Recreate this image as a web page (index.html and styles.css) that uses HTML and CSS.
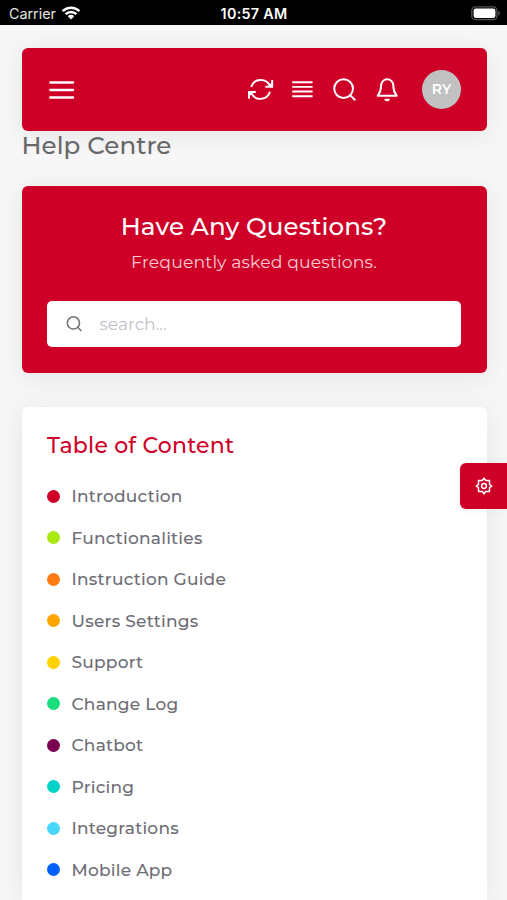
FILE: index.html
```html
<!DOCTYPE html>
<html lang="en">
<head>
<meta charset="utf-8">
<title>Help Centre</title>
<link rel="stylesheet" href="styles.css">
</head>
<body>
<div class="status">
  <div class="carrier"><span>Carrier</span>
    <svg width="20" height="14" viewBox="0 0 20 14"><path d="M1.6 5.2a12 12 0 0 1 16.8 0M4.6 8.2a7.7 7.7 0 0 1 10.8 0" fill="none" stroke="#fff" stroke-width="2.5"/><path d="M10 13.4 6.8 10.2a4.5 4.5 0 0 1 6.4 0z" fill="#fff"/></svg>
  </div>
  <div class="time">10:57 AM</div>
  <div class="battery">
    <svg width="30" height="15" viewBox="0 0 30 15"><rect x=".8" y=".8" width="25.2" height="12.9" rx="3.8" fill="none" stroke="#555" stroke-width="1.3"/><rect x="2.6" y="2.6" width="21.8" height="9.3" rx="2.2" fill="#fff"/><path d="M27.4 5v4.6c2-.7 2-3.9 0-4.6z" fill="#555"/></svg>
  </div>
</div>
<main>
  <nav class="navbar">
    <svg class="menu" width="26" height="20" viewBox="0 0 26 20"><path d="M1.3 2.5h22.8M1.3 10h22.8M1.3 17.5h22.8" stroke="#fff" stroke-width="2.3" stroke-linecap="round"/></svg>
    <div class="actions">
      <svg width="26" height="24" viewBox="0 0 26 24" fill="none" stroke="#fff" stroke-width="1.9"><path d="M3.2 9A10 10 0 0 1 21.9 7.9M22 13.8A10 10 0 0 1 3.3 14.9"/><path d="M24.2 2.1v6.7h-6.8M1 20.7V14h6.8"/><path d="M24.2 4v4.8h-4.8zM1 18.8V14h4.8z" fill="#fff" stroke="none"/></svg>
      <svg width="22" height="18" viewBox="0 0 22 18" stroke="#fff" stroke-width="1.9"><path d="M.2 1.2h20.4M.2 5.9h20.4M.2 10.5h20.4M.2 15.2h20.4"/></svg>
      <svg width="24" height="24" viewBox="0 0 24 24" fill="none" stroke="#fff" stroke-width="2" stroke-linecap="round"><circle cx="10.6" cy="10.6" r="9.4"/><path d="m17.3 17.4 4.4 4.3"/></svg>
      <svg width="24" height="26" viewBox="0 0 24 26" fill="none" stroke="#fff" stroke-width="2" stroke-linecap="round" stroke-linejoin="round"><path d="M18.3 8.4a6.1 6.1 0 0 0-12.2 0c0 7.4-3.4 9.6-3.4 10.4h19c0-.8-3.4-3-3.4-10.4"/><path d="M10.1 22.5a2.4 2.4 0 0 0 4 0z" fill="#fff" stroke-width="1.4"/></svg>
      <div class="avatar">RY</div>
    </div>
  </nav>
  <h1>Help Centre</h1>
  <section class="faq">
    <h2>Have Any Questions?</h2>
    <p>Frequently asked questions.</p>
    <label class="search">
      <svg width="17" height="17" viewBox="0 0 17 17" fill="none" stroke="#75757d" stroke-width="1.6" stroke-linecap="round"><circle cx="7.4" cy="6.9" r="6.1"/><path d="m11.8 11.3 3.2 3.2"/></svg>
      <span>search...</span>
    </label>
  </section>
  <section class="toc">
    <h3>Table of Content</h3>
    <ul>
      <li>Introduction</li>
      <li>Functionalities</li>
      <li>Instruction Guide</li>
      <li>Users Settings</li>
      <li>Support</li>
      <li>Change Log</li>
      <li>Chatbot</li>
      <li>Pricing</li>
      <li>Integrations</li>
      <li>Mobile App</li>
    </ul>
  </section>
</main>
<div class="customizer">
  <svg width="18" height="18" viewBox="0 0 18 18" fill="none" stroke="#fff" stroke-width="1.5" stroke-linejoin="round"><circle cx="9" cy="9" r="2.4"/><path d="M9 1.2 10.7 3.5 14.5 3.5 14.5 7.3 16.8 9 14.5 10.7 14.5 14.5 10.7 14.5 9 16.8 7.3 14.5 3.5 14.5 3.5 10.7 1.2 9 3.5 7.3 3.5 3.5 7.3 3.5z"/></svg>
</div>
</body>
</html>
```
FILE: styles.css
```css
* { box-sizing: border-box; margin: 0; padding: 0; }
body {
  height: 900px;
  overflow: hidden;
  background: #f7f7f7;
  font-family: Montserrat, Inter, sans-serif;
  color: #6e6d75;
}
svg { display: block; flex: none; }
.status {
  height: 25px;
  padding: 2px 6px 0 9px;
  background: #000;
  color: #fff;
  display: grid;
  grid-template-columns: 1fr auto 1fr;
  align-items: center;
  font: 14.3px Inter, sans-serif;
}
.carrier { display: flex; align-items: center; gap: 5px; color: #e4e4e4; }
.carrier svg { margin-top: -2px; }
.time { font-weight: 600; letter-spacing: .3px; margin-right: 2px; }
.battery { justify-self: end; margin-top: -1px; }
main {
  height: 875px;
  overflow: hidden;
  padding: 23px 20.5px 0 21.5px;
  display: flex;
  flex-direction: column;
}
.navbar, .faq, .toc {
  flex: none;
  border-radius: 6px;
  box-shadow: 0 4px 26px rgba(34, 41, 47, .09);
}
.navbar, .faq { background: #ce0027; }
.navbar {
  height: 83px;
  padding: 0 25.5px 0 27px;
  display: flex;
  align-items: center;
  justify-content: space-between;
}
.actions { display: flex; align-items: center; }
.actions svg:nth-child(2) { margin-left: 18px; }
.actions svg:nth-child(3) { margin-left: 19px; }
.actions svg:nth-child(4) { margin-left: 18px; }
.avatar {
  width: 39px;
  height: 39px;
  margin-left: 23px;
  border-radius: 50%;
  background: #c1c1c1;
  color: #fff;
  font-size: 14px;
  font-weight: 600;
  line-height: 39px;
  text-align: center;
}
h1 {
  flex: none;
  height: 55px;
  line-height: 28px;
  font-size: 24.6px;
  font-weight: 500;
  letter-spacing: .08px;
  color: #686868;
}
.faq {
  height: 187px;
  padding: 24px 25.5px 0;
  text-align: center;
  color: #fff;
}
h2 {
  line-height: 32px;
  font-size: 24.6px;
  font-weight: 500;
  letter-spacing: .12px;
}
.faq p {
  margin-top: 7px;
  line-height: 26px;
  font-size: 17.3px;
  letter-spacing: .12px;
  color: #f8cad2;
}
.search {
  height: 46px;
  margin-top: 26px;
  padding-left: 19px;
  display: flex;
  align-items: center;
  gap: 16.5px;
  border-radius: 5px;
  background: #fff;
  color: #c2c1c8;
  font-size: 17.1px;
}
.search span { margin-top: -2px; }
.toc {
  height: 493px;
  margin-top: 34px;
  padding: 23px 25.5px 0;
  border-radius: 6px 6px 0 0;
  background: #fff;
}
h3 {
  line-height: 32px;
  font-size: 22px;
  font-weight: 500;
  letter-spacing: .2px;
  color: #ce0027;
}
ul { margin-top: 13.3px; list-style: none; }
li {
  height: 41.55px;
  display: flex;
  align-items: center;
  font-size: 17px;
  font-weight: 500;
  letter-spacing: .22px;
}
li::before {
  content: "";
  width: 13px;
  height: 13px;
  margin-right: 11.5px;
  border-radius: 50%;
  background: #ce0027;
}
li:nth-child(2)::before { background: #a9e810; }
li:nth-child(3)::before { background: #ff7a12; }
li:nth-child(4)::before { background: #ffa500; }
li:nth-child(5)::before { background: #ffd200; }
li:nth-child(6)::before { background: #19dc7d; }
li:nth-child(7)::before { background: #77004f; }
li:nth-child(8)::before { background: #00d3c5; }
li:nth-child(9)::before { background: #48d6fa; }
li:nth-child(10)::before { background: #0060ff; }
.customizer {
  position: fixed;
  top: 462.5px;
  right: 0;
  width: 47px;
  height: 46.5px;
  display: flex;
  align-items: center;
  justify-content: center;
  border-radius: 6px 0 0 6px;
  background: #ce0027;
  box-shadow: 0 0 10px rgba(34, 41, 47, .06);
}
```
